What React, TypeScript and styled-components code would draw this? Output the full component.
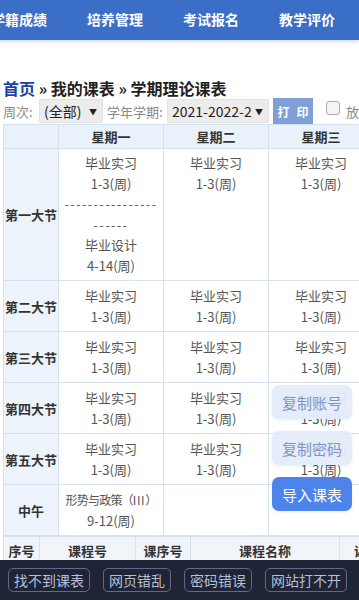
import React from "react";
import styled, { createGlobalStyle } from "styled-components";

const Global = createGlobalStyle`
  html, body { margin: 0; padding: 0; }
  body {
    width: 359px;
    height: 600px;
    overflow: hidden;
    background: #fff;
    font-family: "Noto Sans CJK SC", "Noto Sans", sans-serif;
    color: #333;
  }
`;

const Page = styled.div`
  width: 359px;
  height: 600px;
  overflow: hidden;
  position: relative;
`;

const Nav = styled.nav`
  height: 40px;
  background: #3b6ec6;
  display: flex;
  align-items: center;
  gap: 40px;
  margin-left: -9px;
  white-space: nowrap;
  box-shadow: 0 2px 4px rgba(40, 70, 140, 0.18);
`;

const NavItem = styled.span`
  color: #fff;
  font-size: 14px;
  font-weight: 700;
  line-height: 40px;
  flex: none;
  padding-bottom: 2px;
`;

const Content = styled.div`
  padding-left: 3px;
`;

const Crumb = styled.div`
  margin-top: 38px;
  font-size: 16px;
  line-height: 20px;
  font-weight: 700;
  color: #222;
  white-space: nowrap;
`;

const CrumbLink = styled.span`
  color: #1c3fa8;
`;

const Controls = styled.div`
  margin-top: 1px;
  height: 24px;
  display: flex;
  align-items: center;
  white-space: nowrap;
`;

const Label = styled.span<{ $w: number; $ml?: number }>`
  flex: none;
  width: ${(p) => p.$w}px;
  margin-left: ${(p) => p.$ml ?? 0}px;
  font-size: 13px;
  color: #888;
`;

const Select = styled.span<{ $w: number }>`
  flex: none;
  display: inline-flex;
  align-items: center;
  justify-content: space-between;
  box-sizing: border-box;
  width: ${(p) => p.$w}px;
  height: 24px;
  padding: 0 5px 0 4px;
  background: #ececec;
  border: 1px solid #e2e2e2;
  border-radius: 2px;
  font-size: 14px;
  color: #222;
`;

const Caret = styled.span`
  font-size: 8px;
  color: #222;
`;

const PrintButton = styled.span`
  flex: none;
  display: inline-flex;
  align-items: center;
  justify-content: center;
  width: 40px;
  height: 26px;
  margin-left: 4px;
  background: #7f9fd7;
  color: #fff;
  font-size: 12px;
  font-weight: 700;
  letter-spacing: 7px;
  padding-left: 7px;
  box-sizing: border-box;
`;

const Check = styled.span`
  flex: none;
  display: inline-block;
  width: 12px;
  height: 12px;
  margin-left: 13px;
  border: 1px solid #aaa;
  border-radius: 3px;
  background: #f4f4f4;
  position: relative;
  top: -3px;
`;

const CheckLabel = styled.span`
  font-size: 13px;
  color: #888;
  margin-left: 6px;
`;

const Table = styled.table`
  margin-top: 1px;
  border-collapse: collapse;
  table-layout: fixed;
  width: 580px;
`;

const Th = styled.th<{ $w?: number }>`
  ${(p) => (p.$w ? `width: ${p.$w}px;` : "")}
  height: 24px;
  padding: 0;
  background: #e9f1fb;
  border: 1px solid #d6e1ee;
  font-size: 13px;
  font-weight: 700;
  color: #333;
  text-align: center;
  box-sizing: border-box;
`;

const RowLabel = styled.td`
  background: #edf3fb;
  border: 1px solid #d6e1ee;
  font-size: 13px;
  font-weight: 700;
  color: #333;
  text-align: center;
  padding: 0;
`;

const Cell = styled.td`
  border: 1px solid #d6e1ee;
  padding: 4px 5px;
  font-size: 13px;
  line-height: 21px;
  color: #555;
  text-align: center;
  vertical-align: middle;
`;

const TopCell = styled(Cell)`
  vertical-align: top;
  line-height: 20.5px;
`;

const Line = styled.div``;

const NarrowLine = styled.div`
  white-space: nowrap;
  font-size: 12px;
  letter-spacing: -0.8px;
`;

const Roman = styled.span`
  letter-spacing: 0.6px;
`;

const Dashes = styled.div`
  word-break: break-all;
  letter-spacing: 1.3px;
  color: #666;
`;

const ListTable = styled.table`
  border-collapse: collapse;
  table-layout: fixed;
  width: 412px;
`;

const ListTh = styled.th<{ $w: number }>`
  width: ${(p) => p.$w}px;
  height: 26px;
  padding: 0;
  background: #f1f5fa;
  border: 1px solid #d6e1ee;
  font-size: 13px;
  font-weight: 700;
  color: #333;
  text-align: center;
  white-space: nowrap;
`;

const BottomBar = styled.div`
  position: absolute;
  left: 0;
  right: 0;
  bottom: 0;
  height: 40px;
  background: #1f2436;
  display: flex;
  align-items: center;
  gap: 13px;
  padding-left: 8px;
  white-space: nowrap;
`;

const BarButton = styled.span`
  flex: none;
  height: 24px;
  box-sizing: border-box;
  border: 1px solid #5f6a8a;
  border-radius: 5px;
  padding: 0 5px;
  display: inline-flex;
  align-items: center;
  font-size: 14px;
  color: #b8bfd6;
`;

const FloatStack = styled.div`
  position: absolute;
  right: 7px;
  bottom: 89px;
  display: flex;
  flex-direction: column;
  gap: 12px;
`;

const FloatButton = styled.span<{ $primary?: boolean }>`
  width: 80px;
  height: 34px;
  border-radius: 7px;
  display: flex;
  align-items: center;
  justify-content: center;
  font-size: 15px;
  background: ${(p) => (p.$primary ? "#4d84ea" : "rgba(228, 235, 250, 0.96)")};
  color: ${(p) => (p.$primary ? "#fff" : "#7f94c6")};
  box-shadow: 0 1px 3px rgba(60, 90, 160, 0.12);
`;

const days = ["星期一", "星期二", "星期三", "星期四", "星期五"];

const Course = ({ name, weeks }: { name: string; weeks: string }) => (
  <>
    <Line>{name}</Line>
    <Line>{weeks}</Line>
  </>
);

const practice = <Course name="毕业实习" weeks="1-3(周)" />;

const sessions = ["第二大节", "第三大节", "第四大节", "第五大节"];

export default function App() {
  return (
    <Page>
      <Global />
      <Nav>
        <NavItem>学籍成绩</NavItem>
        <NavItem>培养管理</NavItem>
        <NavItem>考试报名</NavItem>
        <NavItem>教学评价</NavItem>
      </Nav>
      <Content>
        <Crumb>
          <CrumbLink>首页</CrumbLink> » 我的课表 » 学期理论课表
        </Crumb>
        <Controls>
          <Label $w={36}>周次:</Label>
          <Select $w={64}>
            (全部) <Caret>▼</Caret>
          </Select>
          <Label $w={60} $ml={4}>
            学年学期:
          </Label>
          <Select $w={102}>
            2021-2022-2 <Caret>▼</Caret>
          </Select>
          <PrintButton>打印</PrintButton>
          <Check />
          <CheckLabel>放大</CheckLabel>
        </Controls>
        <Table>
          <thead>
            <tr>
              <Th $w={55} />
              {days.map((d) => (
                <Th key={d} $w={105}>
                  {d}
                </Th>
              ))}
            </tr>
          </thead>
          <tbody>
            <tr>
              <RowLabel>第一大节</RowLabel>
              <TopCell>
                {practice}
                <Dashes>----------------------</Dashes>
                <Course name="毕业设计" weeks="4-14(周)" />
              </TopCell>
              <TopCell>{practice}</TopCell>
              <TopCell>{practice}</TopCell>
              <TopCell>{practice}</TopCell>
              <TopCell />
            </tr>
            {sessions.map((s) => (
              <tr key={s}>
                <RowLabel>{s}</RowLabel>
                <Cell>{practice}</Cell>
                <Cell>{practice}</Cell>
                <Cell>{practice}</Cell>
                <Cell>{practice}</Cell>
                <Cell />
              </tr>
            ))}
            <tr>
              <RowLabel>中午</RowLabel>
              <Cell>
                <NarrowLine>
                  形势与政策（<Roman>III</Roman>）
                </NarrowLine>
                <Line>9-12(周)</Line>
              </Cell>
              <Cell />
              <Cell />
              <Cell />
              <Cell />
            </tr>
          </tbody>
        </Table>
        <ListTable>
          <thead>
            <tr>
              <ListTh $w={35}>序号</ListTh>
              <ListTh $w={95}>课程号</ListTh>
              <ListTh $w={54}>课序号</ListTh>
              <ListTh $w={148}>课程名称</ListTh>
              <ListTh $w={80}>课程属性</ListTh>
            </tr>
          </thead>
        </ListTable>
      </Content>
      <FloatStack>
        <FloatButton>复制账号</FloatButton>
        <FloatButton>复制密码</FloatButton>
        <FloatButton $primary>导入课表</FloatButton>
      </FloatStack>
      <BottomBar>
        <BarButton>找不到课表</BarButton>
        <BarButton>网页错乱</BarButton>
        <BarButton>密码错误</BarButton>
        <BarButton>网站打不开</BarButton>
        <BarButton>其他问题</BarButton>
      </BottomBar>
    </Page>
  );
}
